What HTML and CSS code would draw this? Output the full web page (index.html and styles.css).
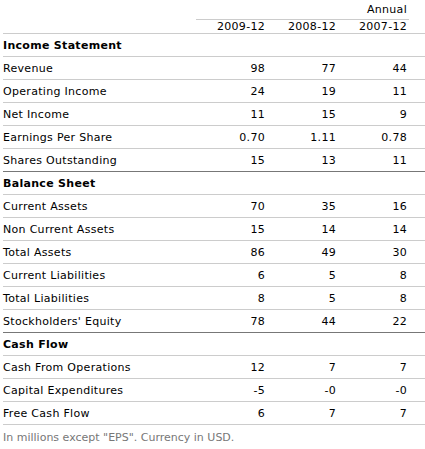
FILE: index.html
```html
<!DOCTYPE html>
<html lang="en">
<head>
  <meta charset="UTF-8">
  <title>Financials - Annual</title>
  <link rel="stylesheet" href="styles.css">
</head>
<body>
  <div class="wrap">
    <table class="fin">
      <colgroup>
        <col class="c-label">
        <col class="c-num">
        <col class="c-num">
        <col class="c-num">
        <col class="c-pad">
      </colgroup>
      <thead>
        <tr class="period">
          <th></th>
          <th colspan="3">Annual</th>
          <th class="pad"></th>
        </tr>
        <tr class="dates">
          <th></th>
          <th>2009-12</th>
          <th>2008-12</th>
          <th>2007-12</th>
          <th></th>
        </tr>
      </thead>
      <tbody>
        <tr class="section"><td colspan="5">Income Statement</td></tr>
        <tr><td>Revenue</td><td>98</td><td>77</td><td>44</td><td></td></tr>
        <tr><td>Operating Income</td><td>24</td><td>19</td><td>11</td><td></td></tr>
        <tr><td>Net Income</td><td>11</td><td>15</td><td>9</td><td></td></tr>
        <tr><td>Earnings Per Share</td><td>0.70</td><td>1.11</td><td>0.78</td><td></td></tr>
        <tr class="last"><td>Shares Outstanding</td><td>15</td><td>13</td><td>11</td><td></td></tr>

        <tr class="section"><td colspan="5">Balance Sheet</td></tr>
        <tr><td>Current Assets</td><td>70</td><td>35</td><td>16</td><td></td></tr>
        <tr><td>Non Current Assets</td><td>15</td><td>14</td><td>14</td><td></td></tr>
        <tr><td>Total Assets</td><td>86</td><td>49</td><td>30</td><td></td></tr>
        <tr><td>Current Liabilities</td><td>6</td><td>5</td><td>8</td><td></td></tr>
        <tr><td>Total Liabilities</td><td>8</td><td>5</td><td>8</td><td></td></tr>
        <tr class="last"><td>Stockholders' Equity</td><td>78</td><td>44</td><td>22</td><td></td></tr>

        <tr class="section"><td colspan="5">Cash Flow</td></tr>
        <tr><td>Cash From Operations</td><td>12</td><td>7</td><td>7</td><td></td></tr>
        <tr><td>Capital Expenditures</td><td>-5</td><td>-0</td><td>-0</td><td></td></tr>
        <tr><td>Free Cash Flow</td><td>6</td><td>7</td><td>7</td><td></td></tr>
      </tbody>
    </table>
    <p class="note">In millions except "EPS". Currency in USD.</p>
  </div>
</body>
</html>
```

FILE: styles.css
```css
body {
  margin: 0;
  padding: 0;
  background: #fff;
  color: #000;
  font-family: "DejaVu Sans", Verdana, sans-serif;
  font-size: 11px;
  letter-spacing: 0.3px;
}
.wrap {
  padding-left: 3px;
}
.fin {
  width: 422px;
  border-collapse: collapse;
  table-layout: fixed;
}
.c-label { width: 193px; }
.c-num { width: 71px; }
.c-pad { width: 16px; }
.fin th,
.fin td {
  padding: 0;
  line-height: 13px;
  font-weight: normal;
}
.fin th {
  text-align: right;
  padding-right: 2px;
}
.period th {
  height: 16px;
  padding-top: 0;
  padding-bottom: 3px;
  vertical-align: bottom;
}
.period th[colspan] {
  border-bottom: 1px solid #ccc;
}
.dates th {
  height: 13px;
  vertical-align: bottom;
  border-bottom: 1px solid #ccc;
}
.fin td {
  height: 22px;
  vertical-align: middle;
  border-bottom: 1px solid #ccc;
  text-align: right;
  padding-right: 2px;
}
.fin td:first-child {
  text-align: left;
  padding-right: 0;
}
.section td {
  font-weight: bold;
}
.last td {
  border-bottom-color: #777;
}
.note {
  margin: 6px 0 0 0;
  line-height: 13px;
  color: #777;
  letter-spacing: 0;
}
```
